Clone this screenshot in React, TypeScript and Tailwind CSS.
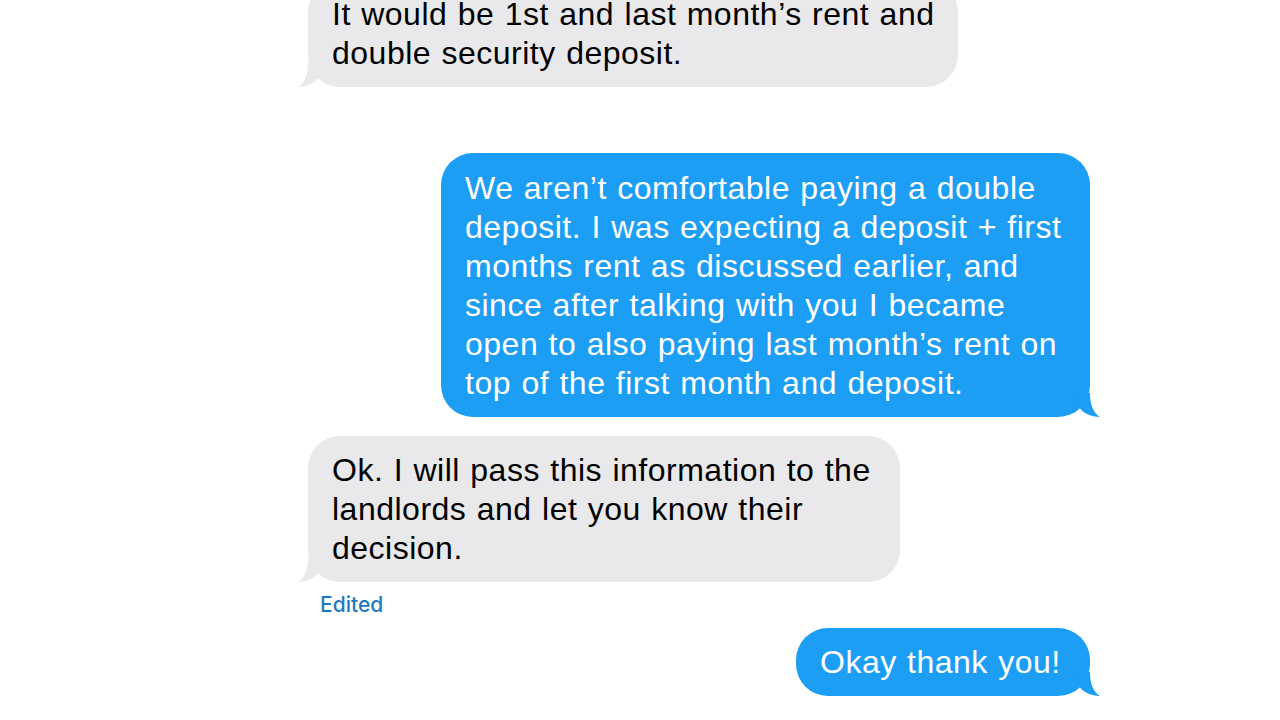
import React from "react";

const font = { fontFamily: '"Liberation Sans", Arial, sans-serif', wordSpacing: "1px" };

function Tail({ side, color }: { side: "left" | "right"; color: string }) {
  const pos =
    side === "right"
      ? "absolute bottom-0 right-[-10px]"
      : "absolute bottom-0 left-[-10px] -scale-x-100";
  return (
    <svg className={pos} width="28" height="32" viewBox="0 0 28 32" fill={color}>
      <path d="M8 23.5 C12 28.5 19 31.8 28 32 C22.5 28.5 18 22 18 8 L6 8 Z" />
    </svg>
  );
}

function Bubble({
  side,
  width,
  lines,
  pad,
  className = "",
}: {
  side: "left" | "right";
  width: string;
  lines: string[];
  pad: string;
  className?: string;
}) {
  const isRight = side === "right";
  const color = isRight ? "#1b9ef4" : "#e9e9eb";
  return (
    <div
      className={`relative ${width} ${isRight ? "self-end bg-[#1b9ef4] text-white" : "self-start bg-[#e9e9eb] text-black"} ${pad} rounded-[32px] pl-[24px] ${className}`}
    >
      <Tail side={side} color={color} />
      <div className="relative text-[32px] leading-[39px] tracking-[0.5px] whitespace-nowrap" style={font}>
        {lines.map((l, i) => (
          <div key={i}>{l}</div>
        ))}
      </div>
    </div>
  );
}

export default function App() {
  return (
    <div className="w-[1280px] h-[720px] overflow-hidden bg-white">
      <div className="flex flex-col pl-[308px] pr-[190px]">
        <Bubble
          side="left"
          width="w-[650px]"
          pad="pt-[15px] pb-[14px]"
          className="mt-[-20px]"
          lines={["It would be 1st and last month\u2019s rent and", "double security deposit."]}
        />
        <Bubble
          side="right"
          width="w-[649px]"
          pad="pt-[16px] pb-[14px]"
          className="mt-[66px]"
          lines={[
            "We aren\u2019t comfortable paying a double",
            "deposit. I was expecting a deposit + first",
            "months rent as discussed earlier, and",
            "since after talking with you I became",
            "open to also paying last month\u2019s rent on",
            "top of the first month and deposit.",
          ]}
        />
        <Bubble
          side="left"
          width="w-[592px]"
          pad="pt-[15px] pb-[14px]"
          className="mt-[19px]"
          lines={[
            "Ok. I will pass this information to the",
            "landlords and let you know their",
            "decision.",
          ]}
        />
        <div
          className="mt-[11px] ml-[12px] text-[21px] leading-[24px] font-medium text-[#1a7bc0]"
          style={{ fontFamily: 'Inter, "Liberation Sans", Arial, sans-serif' }}
        >
          Edited
        </div>
        <Bubble
          side="right"
          width="w-[294px]"
          pad="pt-[15px] pb-[14px]"
          className="mt-[11px]"
          lines={["Okay thank you!"]}
        />
      </div>
    </div>
  );
}
